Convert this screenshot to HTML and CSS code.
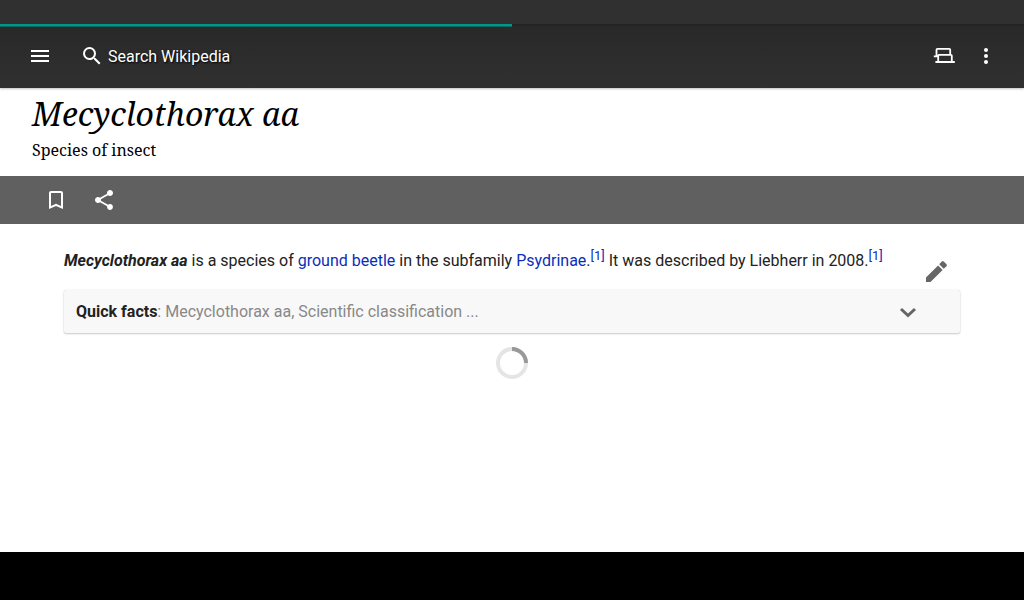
FILE: index.html
```html
<!DOCTYPE html>
<html lang="en">
<head>
<meta charset="utf-8">
<meta name="viewport" content="width=device-width, initial-scale=1">
<title>Mecyclothorax aa</title>
<link rel="stylesheet" href="styles.css">
</head>
<body>
<div class="status"></div>
<header class="toolbar">
  <progress class="load" value="50" max="100" aria-label="Page loading"></progress>
  <button class="icon-btn" aria-label="Menu"><svg class="icon" viewBox="0 0 24 24"><path d="M3 18h18v-2H3v2zm0-5h18v-2H3v2zm0-7v2h18V6H3z"/></svg></button>
  <button class="search"><svg class="icon" viewBox="0 0 24 24"><path d="M15.5 14h-.79l-.28-.27A6.47 6.47 0 0 0 16 9.5 6.5 6.5 0 1 0 9.5 16c1.61 0 3.09-.59 4.23-1.57l.27.28v.79l5 4.99L20.49 19l-4.99-5zm-6 0C7.01 14 5 11.99 5 9.5S7.01 5 9.5 5 14 7.01 14 9.5 11.99 14 9.5 14z"/></svg><span>Search Wikipedia</span></button>
  <button class="icon-btn tabs" aria-label="Tabs"><svg class="icon line" viewBox="0 0 24 24"><path d="M4.500 12V5.800Q4.500 4.800 5.500 4.800H17.200Q18.200 4.800 18.200 5.800V10M1.800 12.300H5.700L6.800 10.800H18.800Q19.800 10.800 19.800 11.800V17.500M6.200 12.200V17.500M3.400 18H22.800"/></svg></button>
  <button class="icon-btn more" aria-label="More options"><svg class="icon" viewBox="0 0 24 24"><circle cx="12" cy="6" r="2"/><circle cx="12" cy="12" r="2"/><circle cx="12" cy="18" r="2"/></svg></button>
</header>
<main class="page">
  <div class="heading">
    <h1 class="title">Mecyclothorax aa</h1>
    <p class="subtitle">Species of insect</p>
  </div>
  <div class="actions">
    <button class="icon-btn" aria-label="Save"><svg class="icon" viewBox="0 0 24 24"><path d="M17 3H7c-1.1 0-2 .9-2 2v16l7-3 7 3V5c0-1.100-.9-2-2-2zm0 15l-5-2.180L7 18V5h10v13z"/></svg></button>
    <button class="icon-btn" aria-label="Share"><svg class="icon" viewBox="0 0 24 24"><path d="M18 16.080c-.76 0-1.440.3-1.960.77L8.910 12.700c.05-.23.09-.46.09-.7s-.04-.47-.09-.7l7.050-4.110c.54.5 1.250.81 2.040.81 1.660 0 3-1.340 3-3s-1.340-3-3-3-3 1.340-3 3c0 .24.04.47.09.7L8.040 9.810C7.500 9.310 6.790 9 6 9c-1.660 0-3 1.340-3 3s1.340 3 3 3c.79 0 1.500-.31 2.040-.81l7.120 4.160c-.05.21-.08.43-.08.65 0 1.610 1.310 2.920 2.920 2.920s2.920-1.310 2.920-2.920-1.310-2.920-2.920-2.920z"/></svg></button>
  </div>
  <article class="content">
    <div class="intro">
      <p class="lead"><b><i>Mecyclothorax aa</i></b> is a species of <a href="#">ground beetle</a> in the subfamily <a href="#">Psydrinae</a>.<sup><a href="#">[1]</a></sup> It was described by Liebherr in 2008.<sup><a href="#">[1]</a></sup></p>
      <button class="icon-btn edit" aria-label="Edit"><svg class="pencil" viewBox="0 0 24 24"><path d="M2 17.500V22H6.500L18.600 9.900 14.100 5.400zM22.500 6.300a1.500 1.500 0 0 0 0-2L19.800 1.500a1.500 1.500 0 0 0-2 0L15.200 4.300 19.700 8.800z"/></svg></button>
    </div>
    <button class="facts"><span class="muted"><b>Quick facts</b>: Mecyclothorax aa, Scientific classification ...</span><svg class="chevron" viewBox="0 0 24 24"><path d="M5 9l7 6.500L19 9"/></svg></button>
    <svg class="spinner" viewBox="0 0 32 32" role="img" aria-label="Loading"><circle cx="16" cy="16" r="14" stroke="#e5e5e5"/><path d="M16 2a14 14 0 0 1 14 14" stroke="#999"/></svg>
  </article>
</main>
<footer class="navbar"></footer>
</body>
</html>
```
FILE: styles.css
```css
* { box-sizing: border-box; }
body {
  margin: 0;
  min-height: 100vh;
  display: flex;
  flex-direction: column;
  background: #fff;
  color: #222;
  font-family: Roboto, sans-serif;
  font-size: 16px;
}
button {
  border: 0;
  padding: 0;
  background: none;
  color: inherit;
  font: inherit;
  cursor: pointer;
}
a { color: #0a2eb8; text-decoration: none; }
.status { height: 24px; background: #303030; }
.toolbar {
  position: relative;
  height: 64px;
  padding: 0 20px 0 16px;
  display: flex;
  align-items: center;
  background: linear-gradient(#222 0, #292929 3px, #303030 100%);
  color: #fff;
  box-shadow: 0 1px 2px rgba(0, 0, 0, .25);
}
.load {
  position: absolute;
  top: 0;
  left: 0;
  width: 100%;
  height: 3px;
  appearance: none;
  border: 0;
}
.load::-webkit-progress-bar { background: transparent; }
.load::-webkit-progress-value { background: linear-gradient(#009688 2px, #0f695f 2px); }
.icon-btn { width: 48px; height: 48px; display: grid; place-items: center; }
.icon { width: 24px; height: 24px; fill: currentColor; display: block; }
.line { fill: none; stroke: currentColor; stroke-width: 1.8; }
.search {
  flex: 1;
  height: 48px;
  margin-left: 16px;
  display: flex;
  align-items: center;
  gap: 4px;
  text-shadow: 1px 1px 2px #000;
}
.more { width: 36px; }
.heading {
  padding: 6px 32px 14px;
  font-family: "Noto Serif", "Droid Serif", "Liberation Serif", serif;
  color: #000;
}
.title { margin: 0; font-size: 32px; line-height: 40px; font-weight: 400; font-style: italic; }
.subtitle { margin: 0; padding-top: 4px; font-size: 16px; line-height: 24px; }
.page { flex: 1; }
.actions { padding: 0 32px; display: flex; background: #606060; color: #fff; }
.content { padding: 24px 64px; }
.intro { display: flex; justify-content: space-between; }
.lead { margin: 0; line-height: 26px; }
.lead sup { font-size: 13px; line-height: 1; }
.edit { height: 42px; padding-bottom: 6px; place-items: end center; color: #666; }
.pencil { width: 24px; height: 24px; fill: currentColor; display: block; }
.facts {
  width: 100%;
  height: 43px;
  padding: 0 40px 0 12px;
  display: flex;
  align-items: center;
  justify-content: space-between;
  background: #f8f8f8;
  border-radius: 2px;
  box-shadow: 0 1px 2px rgba(0, 0, 0, .2), 0 0 1px rgba(0, 0, 0, .2);
  text-align: left;
}
.facts b { color: #222; }
.muted { color: #888; }
.chevron { width: 24px; height: 24px; fill: none; stroke: #666; stroke-width: 3; }
.spinner { display: block; width: 32px; height: 32px; margin: 14px auto 0; fill: none; stroke-width: 4; }
.navbar { height: 48px; background: #000; }
```
